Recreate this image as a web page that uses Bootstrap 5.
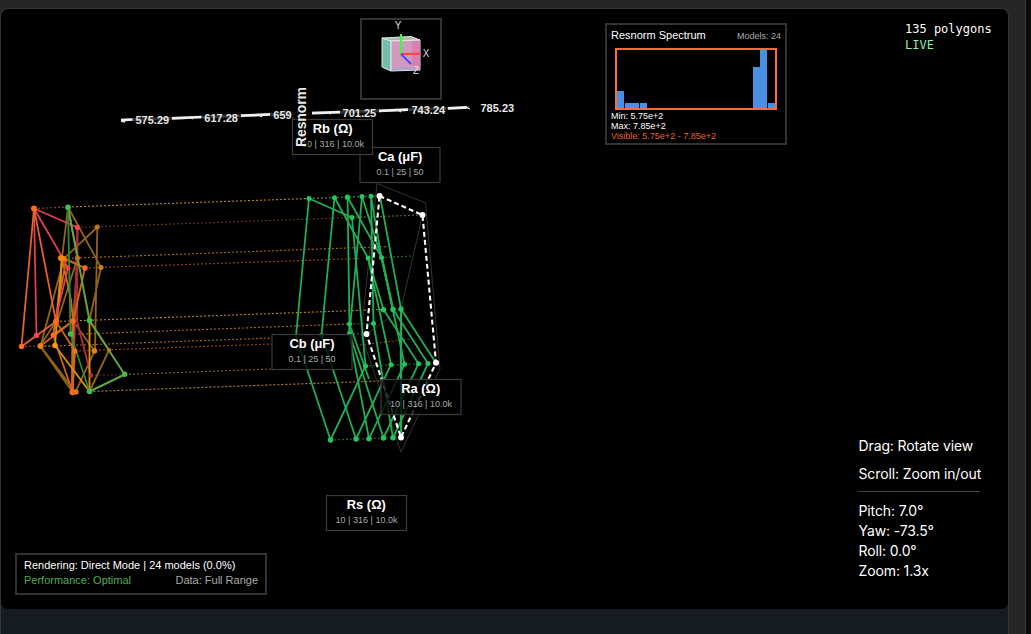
<!DOCTYPE html>
<html lang="en">
<head>
<meta charset="utf-8">
<meta name="viewport" content="width=device-width, initial-scale=1">
<title>Resnorm 3D view</title>
<link href="https://cdn.jsdelivr.net/npm/bootstrap@5.3.0/dist/css/bootstrap.min.css" rel="stylesheet">
<style>
body{background:#0a0a0a;font-family:Inter,sans-serif;color:#fff}
.shell{width:1026px;background:#262626;border-right:1px solid #30363d;padding-top:8px}
.viewer{width:1009px;background:#161b22;border:1px solid #30363d;border-bottom:0;border-radius:8px 8px 0 0}
.stage{height:600px;background:#000;border-radius:7px}
.arial{font-family:"Liberation Sans",Arial,sans-serif}
.frame{border:2px solid #333;background:#000}
.stats{top:12px;left:904px;font:12px/16px "DejaVu Sans Mono",monospace}
.live{color:#86efac}
.help{left:857px;top:427px;width:122px;font-size:14px;line-height:20px;letter-spacing:-.12px;white-space:nowrap}
.help div{padding-left:.5px}
.help hr{margin:7px 0 9px;border-color:#4b5563;opacity:.8}
.spectrum{left:604px;top:14px;width:182px;height:122px;font-size:9px;line-height:10px;padding:4px 4px 0}
.spec-title{font-size:11px;line-height:13px}
.spec-count{line-height:9px;padding-top:3px}
.muted{color:#aaa}
.hist{width:162px;height:62px;border:2px solid #ff6b35;margin:6px 0 1px 4px}
.hist i{width:7px;background:#4a90e2}
.gapbars{width:104px}
.vis{color:#e8622f}
.render{left:14px;top:544px;width:252px;height:42px;font-size:11px;line-height:15px;padding:3px 7px}
.ok{color:#4caf50}
svg text{font-family:"Liberation Sans",Arial,sans-serif}
</style>
</head>
<body class="overflow-hidden">
<main class="shell vh-100">
<section class="viewer h-100">
<div class="stage position-relative overflow-hidden">
<svg class="d-block" width="1007" height="600" viewBox="1 9 1007 600" role="img" aria-label="3D model plot">
<defs><g id="tagbox"><rect x=".5" y=".5" width="80" height="35" fill="#000" fill-opacity=".8" stroke="#3c3c3c" stroke-width="1.200"/></g></defs>
<!-- grid guides -->
<g fill="none" stroke-width="1.150" stroke-dasharray="2 2">
<g stroke="#b8841c"><path d="M68 207L309 198.500M56 321.500L383 309.500M89.500 391.500L380 381"/><path d="M125 374.500L272 369" stroke="#85621a"/></g>
<g stroke="#a5660f"><path d="M64 258.500L388 246.500M70 334.500L349 324M40 346.500L272 338"/></g>
<g stroke="#984214"><path d="M34 208.500L68 207M85 268L360 258.500M21 346.500L55 345.500M75 351L272 344M352 346L410 339"/><path d="M77 227.500L352 217.500" stroke="#6b3019"/><path d="M91 375.500L125 374.500" stroke="#64242c"/></g>
<g stroke="#176b34"><path d="M309 198.500L371 196.300M330 440L401 437.500M365 366L428 363.500M349 333.800L366 334M381 257.500L413 256M349.500 324L373 323.500"/><path d="M352 217.500L422 215M309 198.500L379 196" stroke="#526d24"/></g>
</g>
<!-- outer pentagon -->
<g fill="none" stroke="#333" stroke-width="1"><path d="M377 183.500L425.500 203L440 369L401 452L361 334Z"/><path d="M422.500 215L401 309L367 334"/></g>
<!-- left models -->
<g fill="none" stroke-width="1.800" stroke-linejoin="round">
<g stroke="#956315"><path d="M97.300 227L64 258.500L40.500 346L75.500 392M97.300 227L95 351M68 207L101 267.500L89.500 320.500M68 207L62 258L56 321.500L40 346L72.500 392M77.500 258L61 310L53 335M89.500 320.500L109 350L89.500 391.500M73 321L94.500 351L75.500 392M68 207L77.500 258L73 321"/></g>
<g stroke="#a52d3b" stroke-width="2"><path d="M77.500 227.500L77 321L91 375.500"/><path d="M77.500 227.500L74 351"/></g>
<g stroke="#cf6819"><path d="M62 258L60 297L56 321.500L75 351L72.500 392M62 258L71 300L73 321M64 258L85 268L73 321L40.500 346M62 258L85 268M56 321.500L53 335L72.500 392M66 260L53 335M73 321L53 335"/><path d="M73 321L72.500 392" stroke-width="3"/></g>
<g stroke="#e09010"><path d="M62 258L55 345.500L89.500 391.500L89.500 320.500"/></g>
<g stroke="#df414a"><path d="M34 208.500L77.500 227.500M34 208.500L61 255L68 268L55 321M34 208.500L36.500 335.500"/></g>
<g stroke="#e66027"><path d="M34 208.500L21.500 346.500L56 321.500L34 208.500"/></g>
<g stroke="#62a637"><path d="M68 207L89.500 320.500L124.700 374.500L89.500 391.500" stroke-width="2"/><path d="M68 207L70.500 334L89.500 391.500" stroke="#278b3d"/></g>
</g>
<g fill="#e98214"><circle cx="64" cy="258.500" r="2.500"/><circle cx="77.500" cy="258" r="2.500" fill="#bd7816"/><circle cx="97.300" cy="227" r="2.500" fill="#b97a16"/><circle cx="101" cy="267.500" r="2.500" fill="#c88313"/><circle cx="40.500" cy="346" r="3"/><circle cx="55" cy="345.500" r="2.700" fill="#ff990d"/><circle cx="94.500" cy="351" r="2.700"/><circle cx="109" cy="350" r="2" fill="#b68118"/><circle cx="76" cy="392" r="2.600"/></g>
<g fill="#ff6b20"><circle cx="34" cy="208.500" r="3"/><circle cx="61" cy="258" r="3" fill="#ff8418"/><circle cx="85" cy="268" r="2.700"/><circle cx="56" cy="321.500" r="3"/><circle cx="73" cy="321" r="2.700"/><circle cx="53" cy="335" r="2.500"/><circle cx="21.500" cy="346.500" r="2.700"/><circle cx="75" cy="351" r="2.500"/><circle cx="72.500" cy="392.300" r="3"/></g>
<g fill="#ef454d"><circle cx="77.500" cy="227.500" r="2.700"/><circle cx="68" cy="268" r="2.400"/><circle cx="36.500" cy="335.500" r="2.700"/><circle cx="91" cy="375.500" r="2.200" fill="#b33543"/></g>
<g fill="#3fbe55"><circle cx="68" cy="207.200" r="2.800"/><circle cx="89.500" cy="320.500" r="2.800"/><circle cx="70.500" cy="334" r="2.700"/><circle cx="124.700" cy="374.300" r="2.700"/><circle cx="89.500" cy="391.500" r="2.800"/></g>
<!-- right models -->
<g fill="none" stroke="#1fae55" stroke-width="1.800" stroke-linejoin="round">
<path d="M309 198.500L296 336L330.500 440L365.500 366L352 217.500Z"/>
<path d="M334.500 197.500L321.500 335L356 439L391 364.500L368 258Z"/>
<path d="M347.500 197L349.500 324L349 333.500L369 438.700L404.500 364.300L381.500 257.500Z"/>
<path d="M362 196.500L349.500 333.500L383.500 438L418.500 363.700L383.500 309.500L368 258"/>
<path d="M371 196.300L373.500 323.500L393 437.800L428 363.500L393 309.300L381.500 257.500L371 196.300M362 196.500L381.500 257.500"/>
<path d="M380 196L401 309L436 363M349.500 324L369 379"/><path d="M401 309V437M382 258L393 309.300" stroke-width="2.200"/>
</g>
<g fill="#22c55e"><circle cx="309" cy="198.500" r="2.500"/><circle cx="334.500" cy="197.700" r="2.500"/><circle cx="347.500" cy="197.200" r="2.700"/><circle cx="362" cy="196.500" r="2.500"/><circle cx="371" cy="196.300" r="2.500"/><circle cx="352" cy="217.500" r="2.500"/><circle cx="368" cy="258" r="2.500"/><circle cx="381.500" cy="257.500" r="2.500"/><circle cx="383.500" cy="309.700" r="2.700"/><circle cx="393" cy="309.400" r="2.700"/><circle cx="401" cy="309" r="2.700"/><circle cx="349.500" cy="324" r="2.500"/><circle cx="373.500" cy="323.500" r="2.500"/><circle cx="349.500" cy="333.500" r="2.500"/><circle cx="321.500" cy="335.500" r="2.500"/><circle cx="365.500" cy="366" r="2.500"/><circle cx="391" cy="364.700" r="2.500"/><circle cx="404.500" cy="364.300" r="2.500"/><circle cx="418.500" cy="363.800" r="2.500"/><circle cx="428" cy="363.500" r="2.500"/><circle cx="330.500" cy="440" r="2.700"/><circle cx="356" cy="439" r="2.700"/><circle cx="369" cy="438.700" r="2.700"/><circle cx="383.500" cy="438" r="2.700"/><circle cx="393" cy="437.800" r="2.700"/></g>
<path d="M379.500 196L422.500 215L436 362.800L401 437.500L366.500 334Z" fill="none" stroke="#fff" stroke-width="2.100" stroke-dasharray="5 3"/>
<g fill="#fff"><circle cx="379.500" cy="196" r="3"/><circle cx="422.500" cy="215" r="3"/><circle cx="436" cy="362.800" r="3"/><circle cx="401" cy="437.500" r="3"/><circle cx="366.500" cy="334" r="3"/></g>
<!-- parameter tags -->
<use href="#tagbox" x="359.500" y="147"/><use href="#tagbox" x="292" y="119"/><use href="#tagbox" x="271.500" y="334"/><use href="#tagbox" x="380.500" y="379"/><use href="#tagbox" x="326" y="495"/>
<g fill="#fff" font-size="13" font-weight="700" text-anchor="middle"><text x="400.200" y="161" textLength="44.500" lengthAdjust="spacingAndGlyphs">Ca (μF)</text><text x="332.700" y="133" textLength="40" lengthAdjust="spacingAndGlyphs">Rb (Ω)</text><text x="312" y="348" textLength="45" lengthAdjust="spacingAndGlyphs">Cb (μF)</text><text x="420.700" y="393" textLength="39" lengthAdjust="spacingAndGlyphs">Ra (Ω)</text><text x="366.300" y="509" textLength="39" lengthAdjust="spacingAndGlyphs">Rs (Ω)</text></g>
<g fill="#aaa" font-size="9" text-anchor="middle"><text x="400" y="175" textLength="47">0.1 | 25 | 50</text><text x="333" y="147" textLength="62">10 | 316 | 10.0k</text><text x="312" y="362" textLength="47">0.1 | 25 | 50</text><text x="421" y="407" textLength="62">10 | 316 | 10.0k</text><text x="366.500" y="523" textLength="62">10 | 316 | 10.0k</text></g>
<!-- resnorm axis -->
<path d="M121 120L469 107.500" stroke="#333" stroke-width="3"/>
<path d="M121 120.200L132.500 119.500M172 118.300L201.500 117M241 115.700L270 114.400M312 113.200L340 112.200M379 110.800L408 109.600M448 108.300L467 107.300" stroke="#eee" stroke-width="2.700"/>
<path d="M121 121L125 122M190 117L193 119M259 115L262 117M328 112L331 114M398 110L401 112M466 107L470 109" stroke="#eee" stroke-width="1.300"/>
<rect x="291" y="104" width="21" height="15" fill="#000" fill-opacity=".8"/>
<g fill="#e8e8e8" font-size="11" font-weight="700"><text x="135.500" y="124">575.29</text><text x="204.300" y="122">617.28</text><text x="273.300" y="119">659</text><text x="291.600" y="119" fill="#333">.27</text><text x="342.600" y="117">701.25</text><text x="411.500" y="114">743.24</text><text x="480.500" y="112">785.23</text></g>
<path d="M295 86H308V149H295Z" fill="#000" fill-opacity=".6"/>
<text transform="translate(306.300 147) rotate(-90)" fill="#e8e8e8" font-size="14" font-weight="700" textLength="60">Resnorm</text>
<!-- orientation cube -->
<rect x="361" y="19" width="80" height="80" fill="#000" stroke="#333" stroke-width="2"/>
<g stroke="#e5e5e5" stroke-width="1" stroke-linejoin="round"><path d="M382 38L391 41V71L382 67Z" fill="#70bfac"/><path d="M382 38L411 36.500L420 40L391 41Z" fill="#a3c1a2"/><path d="M391 41L420 40V70L391 71Z" fill="#d09abd"/></g>
<path d="M412 41H420V69L412 66Z" fill="#d880b2"/><path d="M392 68L412 67L419 69.500L392 70.500Z" fill="#aaa0d2"/>
<path d="M401 54V34" stroke="#3f3" stroke-width="2"/><path d="M401 54L421 53.700" stroke="#ff4040" stroke-width="2"/><path d="M401 54L411 64" stroke="#4848ff" stroke-width="2"/>
<g fill="#ddd" font-size="10"><text x="394.700" y="29">Y</text><text x="422.700" y="57">X</text><text x="413" y="74">Z</text></g>
</svg>

<div class="stats position-absolute"><div>135 polygons</div><div class="live">LIVE</div></div>

<aside class="spectrum frame arial position-absolute">
<div class="d-flex justify-content-between"><span class="spec-title">Resnorm Spectrum</span><span class="muted spec-count">Models: 24</span></div>
<div class="hist d-flex align-items-end justify-content-between">
<i style="height:17px"></i><i style="height:5px"></i><i style="height:5px"></i><i style="height:5px"></i><span class="gapbars"></span><i style="height:41px"></i><i style="height:58px"></i><i style="height:5px"></i>
</div>
<div>Min: 5.75e+2</div><div>Max: 7.85e+2</div><div class="vis">Visible: 5.75e+2 - 7.85e+2</div>
</aside>

<aside class="help position-absolute">
<div class="mb-2">Drag: Rotate view</div><div>Scroll: Zoom in/out</div><hr>
<div>Pitch: 7.0°</div><div>Yaw: -73.5°</div><div>Roll: 0.0°</div><div>Zoom: 1.3x</div>
</aside>

<footer class="render frame arial position-absolute">
<div>Rendering: Direct Mode | 24 models (0.0%)</div>
<div class="d-flex justify-content-between"><span class="ok">Performance: Optimal</span><span class="muted">Data: Full Range</span></div>
</footer>
</div>
</section>
</main>
<script src="https://cdn.jsdelivr.net/npm/bootstrap@5.3.0/dist/js/bootstrap.bundle.min.js"></script>
</body>
</html>
